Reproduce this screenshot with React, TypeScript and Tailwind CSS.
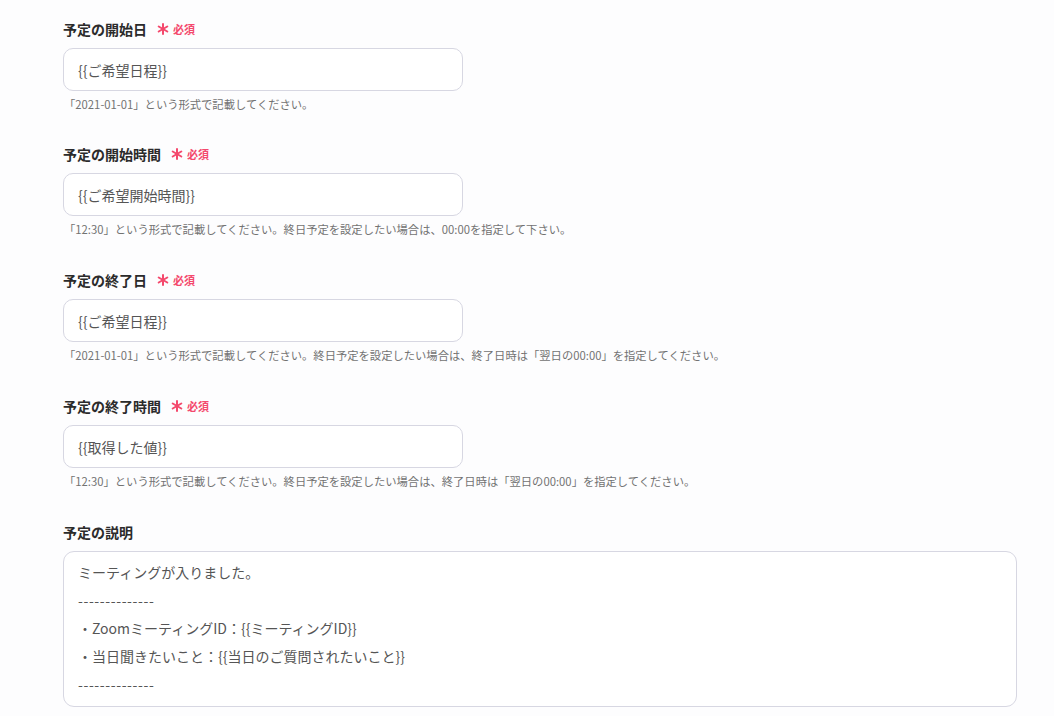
import React from "react";

const fields = [
  {
    label: "予定の開始日",
    value: "{{ご希望日程}}",
    help: "「2021-01-01」という形式で記載してください。",
  },
  {
    label: "予定の開始時間",
    value: "{{ご希望開始時間}}",
    help: "「12:30」という形式で記載してください。終日予定を設定したい場合は、00:00を指定して下さい。",
  },
  {
    label: "予定の終了日",
    value: "{{ご希望日程}}",
    help: "「2021-01-01」という形式で記載してください。終日予定を設定したい場合は、終了日時は「翌日の00:00」を指定してください。",
  },
  {
    label: "予定の終了時間",
    value: "{{取得した値}}",
    help: "「12:30」という形式で記載してください。終日予定を設定したい場合は、終了日時は「翌日の00:00」を指定してください。",
  },
];

const description = [
  "ミーティングが入りました。",
  "--------------",
  "・ZoomミーティングID：{{ミーティングID}}",
  "・当日聞きたいこと：{{当日のご質問されたいこと}}",
  "--------------",
];

function Asterisk() {
  return (
    <svg width="12" height="12" viewBox="0 0 12 12" className="text-[#f4496d]">
      <g stroke="currentColor" strokeWidth="2" strokeLinecap="round">
        <line x1="6" y1="1" x2="6" y2="11" />
        <line x1="1.7" y1="3.5" x2="10.3" y2="8.5" />
        <line x1="1.7" y1="8.5" x2="10.3" y2="3.5" />
      </g>
    </svg>
  );
}

function Label({ text, required }: { text: string; required?: boolean }) {
  return (
    <div className="flex items-center h-[20px] mb-[9px]">
      <span className="text-sm font-bold text-[#2b2b2b] leading-[20px]">{text}</span>
      {required && (
        <span className="flex items-center ml-[10px] gap-[4px]">
          <Asterisk />
          <span className="text-[11px] font-bold text-[#f4496d] leading-[20px]">必須</span>
        </span>
      )}
    </div>
  );
}

export default function App() {
  return (
    <div
      className="w-[1054px] h-[716px] overflow-hidden bg-[#fdfdfe] pl-[63px] pt-[19px]"
      style={{ fontFamily: '"Noto Sans CJK JP", "Noto Sans", sans-serif' }}
    >
      {fields.map((f, i) => (
        <div key={f.label} className={i === 0 ? "mb-[33px]" : "mb-[34px]"}>
          <Label text={f.label} required />
          <div className="w-[400px] h-[43px] rounded-[10px] border border-[#d7d7e2] bg-white flex items-center px-[14px]">
            <span className="text-sm text-[#555]">{f.value}</span>
          </div>
          <p className="mt-[6px] ml-[1px] text-[11.3px] leading-[14px] text-[#727272]">{f.help}</p>
        </div>
      ))}

      <div>
        <Label text="予定の説明" />
        <div className="w-[954px] h-[156px] rounded-[11px] border border-[#d7d7e2] bg-white px-[14px] pt-[6px]">
          {description.map((line, i) => (
            <div
              key={i}
              className={
                line.startsWith("-")
                  ? "text-sm leading-[28px] text-[#555] tracking-[0.6px]"
                  : "text-sm leading-[28px] text-[#555]"
              }
            >
              {line}
            </div>
          ))}
        </div>
      </div>
    </div>
  );
}
